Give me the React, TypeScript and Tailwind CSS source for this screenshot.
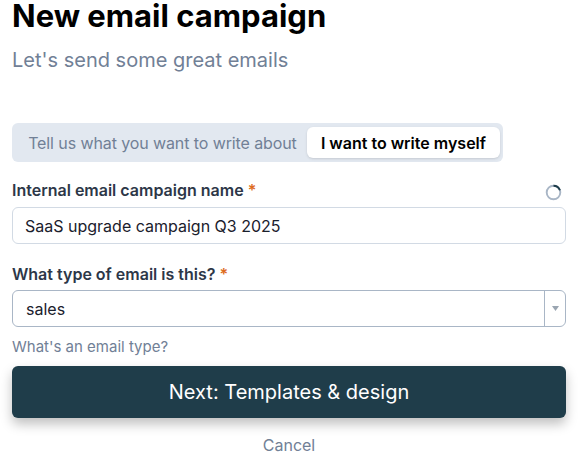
import React from "react";

const Spinner = () => (
  <svg width="17" height="17" viewBox="0 0 18 18" className="shrink-0">
    <circle cx="9" cy="9" r="7.2" fill="none" stroke="#a9b6c6" strokeWidth="2" />
    <path d="M9 1.8 A7.2 7.2 0 0 1 15.8 6.6" fill="none" stroke="#1f3d4a" strokeWidth="2" />
  </svg>
);

const App = () => {
  return (
    <div
      className="w-[578px] h-[465px] overflow-hidden bg-white px-3 text-[#1a202c]"
      style={{ fontFamily: "Inter, 'Noto Sans', sans-serif" }}
    >
      <h1 className="-mt-[2px] text-[31px] leading-9 font-bold text-black">
        New email campaign
      </h1>
      <p className="mt-[12px] text-xl leading-7 text-[#718096]">
        Let's send some great emails
      </p>

      <div className="mt-[49px] flex w-[491px] items-center rounded-md bg-[#e2e8f0] px-[3px] py-1">
        <button className="flex-1 whitespace-nowrap pl-[3px] text-base leading-6 tracking-[-0.1px] text-[#718096]">
          Tell us what you want to write about
        </button>
        <button className="flex h-[31px] items-center whitespace-nowrap rounded-md bg-white px-[14px] text-base leading-6 font-semibold text-black shadow-sm">
          I want to write myself
        </button>
      </div>

      <div className="mt-4 flex h-6 items-center justify-between">
        <label className="text-base leading-6 font-semibold text-[#2d3748]">
          Internal email campaign name <span className="text-[#dd6b20]">*</span>
        </label>
        <span className="mr-[4px] mt-[4px] flex">
          <Spinner />
        </span>
      </div>
      <div className="mt-[5px] flex h-[37px] items-center rounded-md border border-[#d2dae4] px-3 text-base text-[#1a202c]">
        SaaS upgrade campaign Q3 2025
      </div>

      <label className="mt-[18px] block text-base leading-6 font-semibold text-[#2d3748]">
        What type of email is this? <span className="text-[#dd6b20]">*</span>
      </label>
      <div className="mt-[4px] flex h-[37px] items-center rounded-md border border-[#a9b6c6] text-base text-[#1a202c]">
        <span className="flex-1 px-[13px]">sales</span>
        <span className="flex h-full w-[21px] items-center justify-center border-l border-[#a9b6c6]">
          <svg width="7" height="5" viewBox="0 0 7 5">
            <path d="M0 0 L7 0 L3.5 5 Z" fill="#9aa5b1" />
          </svg>
        </span>
      </div>

      <p className="mt-[10px] text-[15px] leading-5 text-[#718096]">What's an email type?</p>

      <button className="mt-[9px] flex h-[52px] w-full items-center justify-center rounded-md bg-[#1f3d4a] text-xl text-white shadow-[0_6px_12px_rgba(0,0,0,0.25)]">
        Next: Templates & design
      </button>

      <p className="mt-[15px] text-center text-base leading-6 text-[#718096]">Cancel</p>
    </div>
  );
};

export default App;
